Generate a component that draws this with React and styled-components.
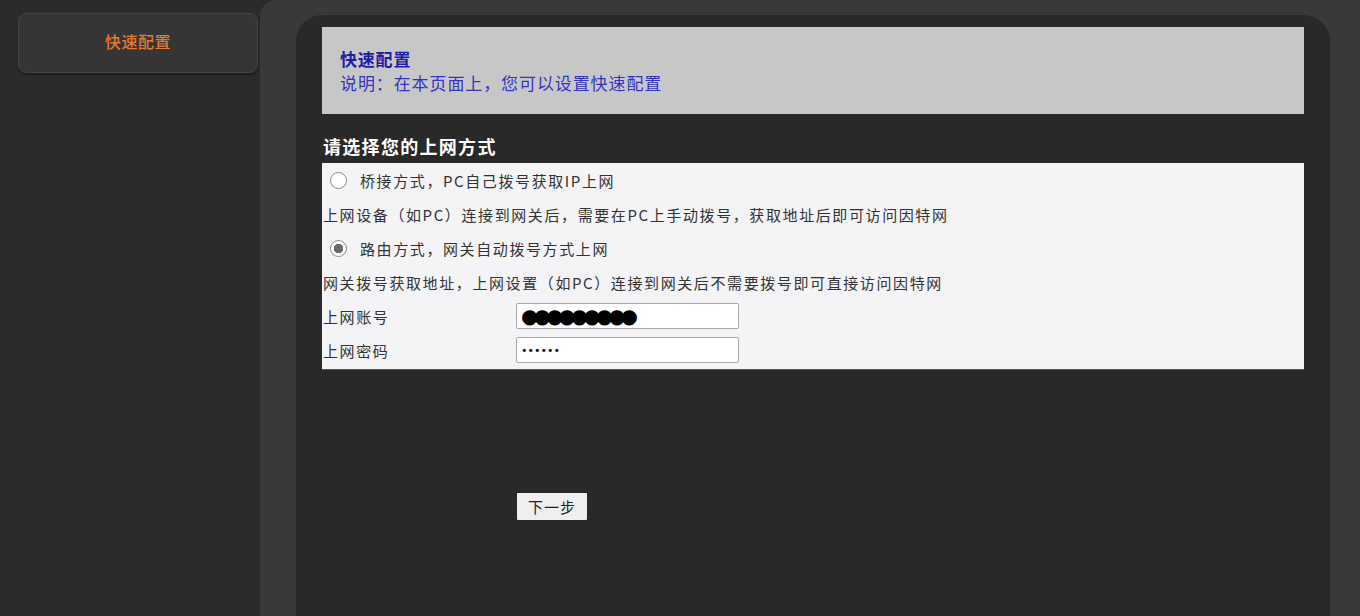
import React from 'react';
import styled, { createGlobalStyle } from 'styled-components';

const GlobalStyle = createGlobalStyle`
  html, body {
    margin: 0;
    padding: 0;
    background: #2b2a2b;
    font-family: "Noto Sans CJK SC", "DejaVu Sans", sans-serif;
  }
`;

export default function App() {
    return (
        <Page>
            <GlobalStyle />
            <Sidebar>
                <MenuItem>快速配置</MenuItem>
            </Sidebar>
            <Stage>
                <Panel>
                    <Header>
                        <h1>快速配置</h1>
                        <p>说明：在本页面上，您可以设置快速配置</p>
                    </Header>
                    <SectionTitle>请选择您的上网方式</SectionTitle>
                    <Form>
                        <Row>
                            <Radio />
                            <span>桥接方式，PC自己拨号获取IP上网</span>
                        </Row>
                        <Row>上网设备（如PC）连接到网关后，需要在PC上手动拨号，获取地址后即可访问因特网</Row>
                        <Row>
                            <Radio checked />
                            <span>路由方式，网关自动拨号方式上网</span>
                        </Row>
                        <Row>网关拨号获取地址，上网设置（如PC）连接到网关后不需要拨号即可直接访问因特网</Row>
                        <Row>
                            <Label>上网账号</Label>
                            <Field $big>●●●●●●●●●</Field>
                        </Row>
                        <Row>
                            <Label>上网密码</Label>
                            <Field>••••••</Field>
                        </Row>
                    </Form>
                    <NextButton>下一步</NextButton>
                </Panel>
            </Stage>
        </Page>
    );
};

const Page = styled.div`
    display: flex;
    height: 616px;
    overflow: hidden;
    background: #2b2a2b;
`;

const Sidebar = styled.div`
    width: 260px;
    flex-shrink: 0;
    padding: 13px 2px 0 18px;
    box-sizing: border-box;
    background: #2c2b2c;
`;

const MenuItem = styled.div`
    height: 60px;
    box-sizing: border-box;
    display: flex;
    align-items: center;
    justify-content: center;
    padding-bottom: 4px;
    background: #363536;
    border: 1px solid #444344;
    border-radius: 8px;
    box-shadow: 0 2px 2px rgba(0,0,0,0.35);
    color: #e27b32;
    font-size: 16px;
    letter-spacing: 0.6px;
    font-weight: 500;
`;

const Stage = styled.div`
    flex: 1;
    display: flex;
    background: #3a393a;
    border-top-left-radius: 16px;
    padding: 15px 30px 0 36px;
`;

const Panel = styled.div`
    flex: 1;
    background: #2a292a;
    border-radius: 26px 26px 0 0;
    padding: 12px 26px 0 26px;
`;

const Header = styled.div`
    height: 87px;
    box-sizing: border-box;
    background: #c8c7c8;
    padding: 20px 18px 0;
    h1 {
        margin: 0;
        font-size: 17px;
        letter-spacing: 0.8px;
        line-height: 24px;
        font-weight: 700;
        color: #1d1da8;
    }
    p {
        margin: 0;
        font-size: 17px;
        letter-spacing: 0.9px;
        line-height: 24px;
        color: #3434c4;
    }
`;

const SectionTitle = styled.h2`
    margin: 20px 0 0 1px;
    font-size: 18px;
    letter-spacing: 1.3px;
    line-height: 25px;
    font-weight: 700;
    color: #ffffff;
`;

const Form = styled.div`
    margin-top: 4px;
    background: #f4f3f5;
    padding-bottom: 2px;
    box-shadow: 0 1px 0 #555;
`;

const Row = styled.div`
    display: flex;
    align-items: center;
    height: 34px;
    padding-left: 1px;
    font-size: 15px;
    letter-spacing: 1.6px;
    color: #333;
    white-space: nowrap;
`;

const Radio = styled.span`
    width: 17px;
    height: 17px;
    box-sizing: border-box;
    margin: 0 13px 0 7px;
    border-radius: 50%;
    border: 1px solid #8a8a8a;
    background: ${p => p.checked ? 'radial-gradient(circle, #6a6a6a 0 4.5px, #fff 5px)' : '#fff'};
`;

const Label = styled.span`
    width: 193px;
`;

const Field = styled.div`
    width: 223px;
    height: 26px;
    box-sizing: border-box;
    border: 1px solid #a9a9a9;
    border-radius: 2px;
    background: #fff;
    padding-left: 4px;
    display: flex;
    align-items: center;
    color: #000;
    font-family: "DejaVu Sans", sans-serif;
    font-size: ${p => p.$big ? '20px' : '11px'};
    letter-spacing: ${p => p.$big ? '-5px' : '0'};
`;

const NextButton = styled.button`
    display: block;
    margin: 124px 0 0 195px;
    width: 70px;
    height: 27px;
    border: none;
    border-radius: 1px;
    background: #efeef0;
    color: #222;
    font-family: "Noto Sans CJK SC", sans-serif;
    font-size: 15px;
    letter-spacing: 1px;
    padding: 0;
`;
